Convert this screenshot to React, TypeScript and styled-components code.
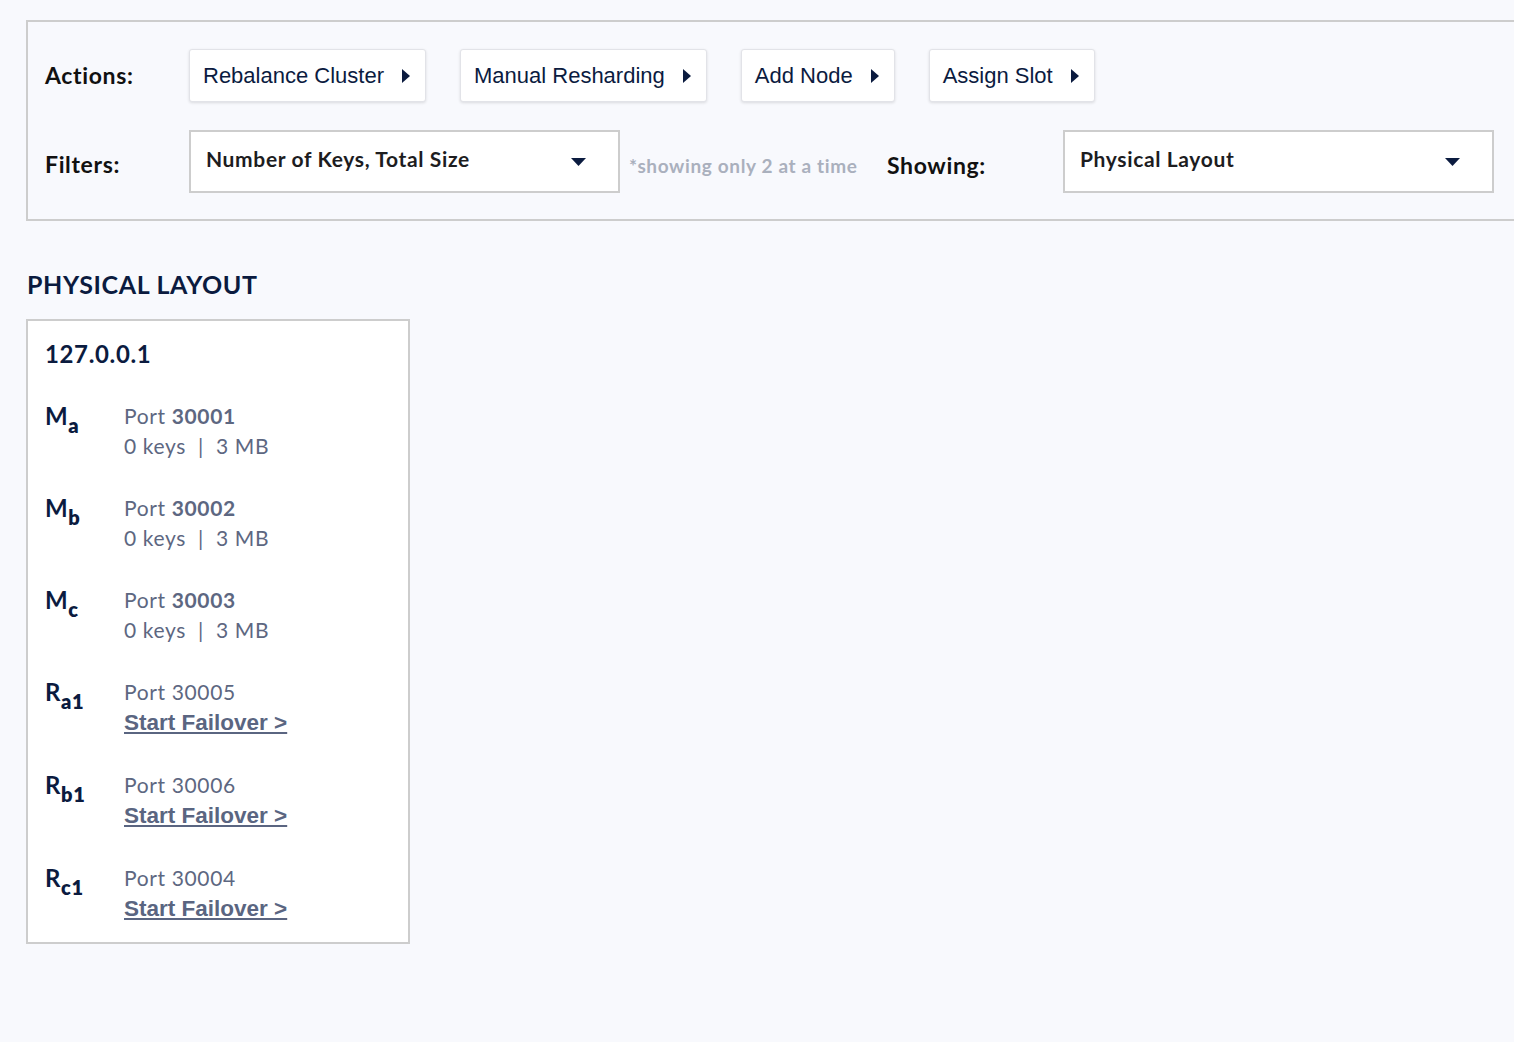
import styled, { createGlobalStyle } from 'styled-components';

const GlobalStyle = createGlobalStyle`
  body {
    margin: 0;
    background: #f8f9fd;
    overflow: hidden;
    font-family: Lato, "Open Sans", sans-serif;
    letter-spacing: 0.04em;
  }
`;

type Node = {
  role: string;
  sub: string;
  port: string;
  boldPort: boolean;
  keys?: string;
  size?: string;
};

const nodes: Node[] = [
  { role: 'M', sub: 'a', port: '30001', boldPort: true, keys: '0 keys', size: '3 MB' },
  { role: 'M', sub: 'b', port: '30002', boldPort: true, keys: '0 keys', size: '3 MB' },
  { role: 'M', sub: 'c', port: '30003', boldPort: true, keys: '0 keys', size: '3 MB' },
  { role: 'R', sub: 'a1', port: '30005', boldPort: false },
  { role: 'R', sub: 'b1', port: '30006', boldPort: false },
  { role: 'R', sub: 'c1', port: '30004', boldPort: false },
];

const actions = ['Rebalance Cluster', 'Manual Resharding', 'Add Node', 'Assign Slot'];

const CaretRight = () => (
  <svg width="8" height="14" viewBox="0 0 8 14">
    <path d="M0 0 L8 7 L0 14 Z" fill="#0b1b3f" />
  </svg>
);

const CaretDown = () => (
  <svg width="15" height="8" viewBox="0 0 15 8">
    <path d="M0 0 L15 0 L7.5 8 Z" fill="#0b1b3f" />
  </svg>
);

const App = () => {
  return (
    <Page>
      <GlobalStyle />
      <Toolbar>
        <Row>
          <Label>Actions:</Label>
          <Buttons>
            {actions.map((a) => (
              <ActionButton key={a}>
                <span>{a}</span>
                <CaretRight />
              </ActionButton>
            ))}
          </Buttons>
        </Row>
        <Row $top={28}>
          <Label $shift={4}>Filters:</Label>
          <Select>
            <span>Number of Keys, Total Size</span>
            <CaretDown />
          </Select>
          <Note>*showing only 2 at a time</Note>
          <Label $shift={6} $width={176}>Showing:</Label>
          <Select>
            <span>Physical Layout</span>
            <CaretDown />
          </Select>
        </Row>
      </Toolbar>

      <Heading>PHYSICAL LAYOUT</Heading>

      <Card>
        <Host>127.0.0.1</Host>
        {nodes.map((n) => (
          <NodeRow key={n.role + n.sub}>
            <Role>
              {n.role}
              <sub>{n.sub}</sub>
            </Role>
            <Info>
              <div>
                Port {n.boldPort ? <b>{n.port}</b> : n.port}
              </div>
              {n.keys ? (
                <div>
                  {n.keys}
                  <Sep>|</Sep>
                  {n.size}
                </div>
              ) : (
                <Failover href="#">Start Failover &gt;</Failover>
              )}
            </Info>
          </NodeRow>
        ))}
      </Card>
    </Page>
  );
};

const Page = styled.div`
  padding: 20px 0 40px 26px;
`;

const Toolbar = styled.div`
  border: 2px solid #cdcdcd;
  margin-right: -40px;
  padding: 27px 0 26px 17px;
`;

const Row = styled.div<{ $top?: number }>`
  display: flex;
  align-items: center;
  margin-top: ${(p) => p.$top ?? 0}px;
`;

const Label = styled.div<{ $shift?: number; $width?: number }>`
  width: ${(p) => p.$width ?? 144}px;
  margin-top: ${(p) => p.$shift ?? -2}px;
  font-size: 23px;
  font-weight: 700;
  color: #111;
`;

const Buttons = styled.div`
  display: flex;
  gap: 34px;
`;

const ActionButton = styled.button`
  display: flex;
  align-items: center;
  gap: 18px;
  height: 53px;
  padding: 0 15px 0 13px;
  background: #fff;
  border: 1px solid #e2e3e8;
  border-radius: 3px;
  box-shadow: 0 1px 3px rgba(0, 0, 0, 0.12);
  font-family: "Liberation Sans", Arial, sans-serif;
  font-size: 22px;
  letter-spacing: 0;
  color: #0b1b3f;
  cursor: pointer;
`;

const Select = styled.div`
  box-sizing: border-box;
  display: flex;
  align-items: center;
  justify-content: space-between;
  width: 431px;
  height: 63px;
  padding: 0 32px 0 15px;
  background: #fff;
  border: 2px solid #cdcdcd;
  font-size: 21px;
  font-weight: 700;
  color: #1d1d1f;

  span {
    margin-top: -6px;
  }
`;

const Note = styled.div`
  margin: 8px 0 0 9px;
  width: 258px;
  font-size: 19px;
  font-weight: 700;
  color: #aab0bd;
`;

const Heading = styled.h2`
  margin: 48px 0 20px 1px;
  font-size: 25px;
  font-weight: 700;
  color: #0b1b3f;
`;

const Card = styled.div`
  box-sizing: border-box;
  width: 384px;
  background: #fff;
  border: 2px solid #cdcdcd;
  padding: 18px 17px 18px;
`;

const Host = styled.div`
  font-size: 24px;
  font-weight: 700;
  color: #0b1b3f;
  margin-bottom: 33px;
`;

const NodeRow = styled.div`
  display: flex;
  & + & {
    margin-top: 32px;
  }
`;

const Role = styled.div`
  width: 79px;
  font-size: 24px;
  font-weight: 700;
  color: #0b1b3f;
  line-height: 30px;

  sub {
    font-size: 20px;
    font-weight: 800;
    vertical-align: -8px;
    line-height: 0;
  }
`;

const Info = styled.div`
  font-size: 21px;
  line-height: 30px;
  color: #5d6781;

  b {
    font-weight: 700;
  }
`;

const Sep = styled.span`
  margin: 0 12px;
`;

const Failover = styled.a`
  font-family: "Liberation Sans", Arial, sans-serif;
  font-weight: 700;
  font-size: 22.5px;
  letter-spacing: 0;
  color: #5a6581;
  text-decoration: underline;
`;

export default App;
